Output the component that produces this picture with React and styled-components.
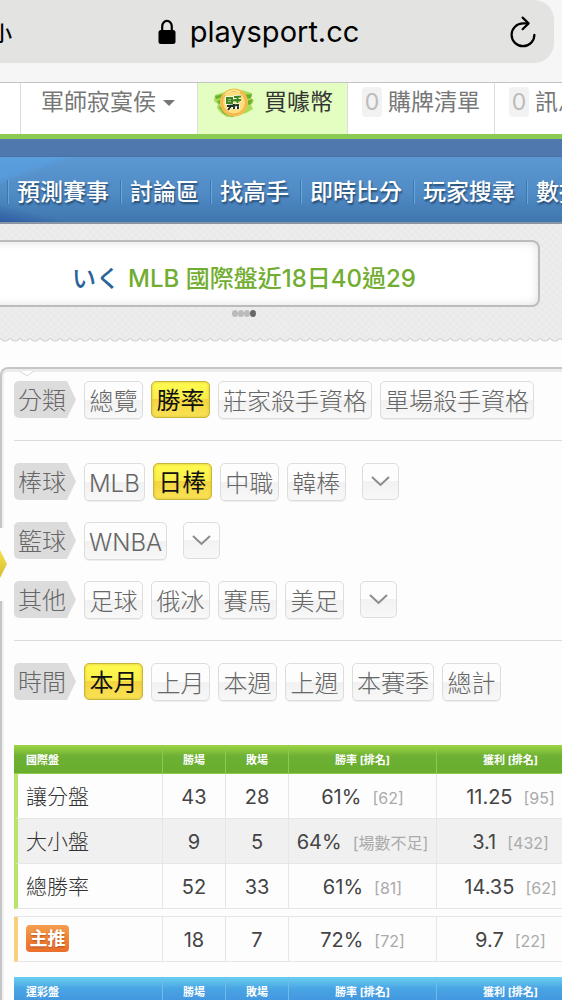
import styled, { createGlobalStyle, css } from "styled-components";

const accountLinks = [
	{ label: "購牌清單", count: 0 },
	{ label: "訊息匣", count: 0 },
];

const navLinks = ["預測賽事", "討論區", "找高手", "即時比分", "玩家搜尋", "數據"];

const filterGroups = [
	[{ title: "分類", options: ["總覽", "勝率", "莊家殺手資格", "單場殺手資格"], active: "勝率" }],
	[
		{ title: "棒球", options: ["MLB", "日棒", "中職", "韓棒"], active: "日棒", more: true },
		{ title: "籃球", options: ["WNBA"], more: true },
		{ title: "其他", options: ["足球", "俄冰", "賽馬", "美足"], more: true },
	],
	[{ title: "時間", options: ["本月", "上月", "本週", "上週", "本賽季", "總計"], active: "本月" }],
];

const records = [
	{ name: "讓分盤", win: 43, lose: 28, rate: "61%", rateRank: "62", profit: "11.25", profitRank: "95" },
	{ name: "大小盤", win: 9, lose: 5, rate: "64%", rateRank: "場數不足", profit: "3.1", profitRank: "432" },
	{ name: "總勝率", win: 52, lose: 33, rate: "61%", rateRank: "81", profit: "14.35", profitRank: "62" },
];

const mainPick = { win: 18, lose: 7, rate: "72%", rateRank: "72", profit: "9.7", profitRank: "22" };

const LockIcon = () => (
	<svg width="18" height="26" viewBox="0 0 18 26" aria-hidden="true">
		<path d="M4.2 12V7.5a4.8 5.6 0 0 1 9.6 0V12" fill="none" stroke="#000" strokeWidth="2.2" />
		<rect x="0.5" y="11" width="17" height="14" rx="2.5" fill="#000" />
	</svg>
);

const ReloadIcon = () => (
	<svg width="26" height="32" viewBox="0 0 26 32" fill="none" stroke="#000" strokeWidth="2.2" strokeLinecap="round" strokeLinejoin="round" aria-hidden="true">
		<path d="M18 7.4H13A11.4 11.4 0 1 0 24.4 18.8" />
		<path d="M12.6 1.6l6 5.8-6 5.8" />
	</svg>
);

const CoinIcon = () => (
	<svg width="40" height="32" viewBox="0 0 40 32" aria-hidden="true">
		<path d="M1 8l10-3 16-2 11 3-1 5 3 3-3 4 2 4-7 4-10 3-9 1-6-4-4-5 1-4-4-3z" fill="#a8dc57" />
		<path d="M1 9l9-2v3l-8 2zM3 14l8-2v3l-6 2zM28 8l10-1-1 4-8 2zM29 15l10-3-2 5-7 2zM5 20l6-1 8 7 8 1-9 3-8-3z" fill="#6eae2f" />
		<circle cx="20" cy="15.5" r="14" fill="#f3bd50" />
		<circle cx="20" cy="15.5" r="11.5" fill="#ffdf7d" stroke="#eeb044" strokeWidth="1" />
		<path d="M11 8l3-3 6-2 6 2" fill="none" stroke="#ffe79a" strokeWidth="1.5" />
		<path d="M13 11h5v5h-5zM20 10l7-.5M20 13h7M23.5 9v7M13 19l12-1M14 23l3-4M20 22v-5M24 22v-4" fill="none" stroke="#fff" strokeWidth="3.5" />
		<path d="M13 11h5v5h-5zM20 10l7-.5M20 13h7M23.5 9v7M14 13.500h12" fill="none" stroke="#3e861d" strokeWidth="2" />
		<path d="M13 19l12-1M14 23l3-4M20 22v-5M24 22v-4" fill="none" stroke="#1c3320" strokeWidth="2" />
	</svg>
);

const ChevronIcon = () => (
	<svg width="19" height="11" viewBox="0 0 19 11" fill="none" stroke="#8c8c8c" strokeWidth="2" aria-hidden="true">
		<path d="M1 1l8.5 8L18 1" />
	</svg>
);

const RecordCells = ({ row }) => (
	<>
		<Cell>{row.win}</Cell>
		<Cell>{row.lose}</Cell>
		<Cell>
			{row.rate}
			<Rank>[{row.rateRank}]</Rank>
		</Cell>
		<Cell>
			{row.profit}
			<Rank>[{row.profitRank}]</Rank>
		</Cell>
	</>
);

const TableHead = ({ title, tone }) => (
	<thead>
		<tr>
			{[title, "勝場", "敗場", "勝率 [排名]", "獲利 [排名]"].map((text) => (
				<HeadCell key={text} $tone={tone} scope="col">
					{text}
				</HeadCell>
			))}
		</tr>
	</thead>
);

const Columns = () => (
	<colgroup>
		<Column $width={148} />
		<Column $width={63} />
		<Column $width={63} />
		<Column $width={148} />
		<Column $width={148} />
	</colgroup>
);

const App = () => {
	return (
		<Page>
			<GlobalStyle />
			<Browser>
				<AddressBar>
					<TextSize type="button" aria-label="文字大小">小</TextSize>
					<Address type="button">
						<LockIcon />
						playsport.cc
					</Address>
					<Reload type="button" aria-label="重新載入">
						<ReloadIcon />
					</Reload>
				</AddressBar>
			</Browser>

			<AccountBar>
				<AccountStart />
				<AccountUser type="button">
					軍師寂寞侯
					<Caret />
				</AccountUser>
				<BuyLink href="#buy">
					<CoinIcon />
					買噱幣
				</BuyLink>
				{accountLinks.map((item) => (
					<AccountLink key={item.label} href="#account">
						<Count>{item.count}</Count>
						{item.label}
					</AccountLink>
				))}
			</AccountBar>

			<NavStrip />
			<Nav>
				{navLinks.map((label) => (
					<NavLink key={label} href="#nav">
						{label}
					</NavLink>
				))}
			</Nav>

			<Banner>
				<BannerBox>
					<BannerUser href="#user">いく</BannerUser>
					<BannerLink href="#record">MLB 國際盤近18日40過29</BannerLink>
				</BannerBox>
				<Dots>
					<Dot type="button" aria-label="1" />
					<Dot type="button" aria-label="2" />
					<Dot type="button" aria-label="3" />
					<Dot type="button" aria-label="4" $active />
				</Dots>
			</Banner>
			<Zigzag />

			<Panel>
				<Notch width="14" height="6" viewBox="0 0 14 6" aria-hidden="true">
					<path d="M0 0l7 5 7-5" fill="#fff" stroke="#d4d4d4" />
				</Notch>
				<SideTab />
				{filterGroups.map((group) => (
					<FilterGroup key={group[0].title}>
						{group.map((filter) => (
							<FilterRow key={filter.title}>
								<FilterTitle>{filter.title}</FilterTitle>
								{filter.options.map((option) => (
									<FilterButton key={option} type="button" $active={option === filter.active}>
										{option}
									</FilterButton>
								))}
								{filter.more && (
									<MoreButton type="button" aria-label="更多">
										<ChevronIcon />
									</MoreButton>
								)}
							</FilterRow>
						))}
					</FilterGroup>
				))}

				<Table>
					<Columns />
					<TableHead title="國際盤" tone="green" />
					<tbody>
						{records.map((row) => (
							<Row key={row.name}>
								<NameCell scope="row">{row.name}</NameCell>
								<RecordCells row={row} />
							</Row>
						))}
					</tbody>
				</Table>
				<PickTable>
					<Columns />
					<tbody>
						<Row>
							<NameCell scope="row" $pick>
								<PickBadge>主推</PickBadge>
							</NameCell>
							<RecordCells row={mainPick} />
						</Row>
					</tbody>
				</PickTable>
				<Table>
					<Columns />
					<TableHead title="運彩盤" tone="blue" />
				</Table>
			</Panel>
		</Page>
	);
};

const GlobalStyle = createGlobalStyle`
	* {
		box-sizing: border-box;
	}

	body {
		margin: 0;
		background: #fdfdfd;
		font-family: Inter, "Noto Sans CJK TC", sans-serif;
	}

	button {
		font: inherit;
		color: inherit;
		border: 0;
		padding: 0;
		background: none;
		cursor: pointer;
	}

	a {
		color: inherit;
		text-decoration: none;
	}
`;

const Page = styled.div`
	height: 100vh;
	overflow: hidden;
	white-space: nowrap;
`;

const Browser = styled.header`
	height: 83px;
	padding-right: 8px;
	background: #f6f6f6;
	border-bottom: 1px solid #c4c4c4;
`;

const AddressBar = styled.div`
	height: 63px;
	margin-left: -37px;
	padding: 0 18px;
	display: grid;
	grid-template-columns: 1fr auto 1fr;
	align-items: center;
	background: #e3e3e2;
	border-radius: 0 20px 20px 0;
`;

const TextSize = styled.button`
	justify-self: start;
	padding: 2px 0 0 11px;
	font-size: 20px;
	font-weight: 500;
`;

const Address = styled.button`
	display: flex;
	align-items: center;
	gap: 14px;
	font-size: 29px;
	line-height: 36px;
`;

const Reload = styled.button`
	display: flex;
	justify-self: end;
`;

const AccountBar = styled.div`
	display: flex;
	height: 56px;
	background: #fff;
	border-bottom: 5px solid #8bcb52;
	color: #777;
	font-size: 23px;
	line-height: 38px;
`;

const AccountStart = styled.div`
	flex: none;
	width: 21px;
	border-right: 1px solid #ddd;
`;

const accountCell = css`
	flex: none;
	display: flex;
	align-items: flex-start;
	border-right: 1px solid #ddd;
`;

const AccountUser = styled.button`
	${accountCell}
	padding: 0 22px 0 20px;
	border-right: 1px solid #ddd;
`;

const Caret = styled.span`
	margin: 17px 0 0 7px;
	border: 6px solid transparent;
	border-top-color: #777;
	border-bottom: 0;
`;

const BuyLink = styled.a`
	${accountCell}
	gap: 10px;
	padding: 0 14px 0 16px;
	background: #e4fdc0;
	color: #333;

	svg {
		margin-top: 4px;
	}
`;

const AccountLink = styled.a`
	${accountCell}
	gap: 6px;
	padding: 0 14px 0 14px;
`;

const Count = styled.span`
	width: 20px;
	margin-top: 4px;
	border-radius: 4px;
	background: #f2f2f2;
	color: #bbb;
	line-height: 30px;
	text-align: center;
`;

const NavStrip = styled.div`
	height: 18px;
	background: #4f78ae;
	border-bottom: 1px solid #4a71a5;
`;

const Nav = styled.nav`
	display: flex;
	align-items: center;
	height: 67px;
	padding-left: 7px;
	background:
		linear-gradient(160deg, rgba(90, 165, 235, 0.5) 0 20px, transparent 28px),
		linear-gradient(15deg, rgba(40, 80, 160, 0.7) 0, transparent 18px),
		linear-gradient(#5b97d0, #508bc6 55%, #3f76ad);
	border-bottom: 2px solid #8995a2;
`;

const NavLink = styled.a`
	flex: none;
	padding: 0 11px 0 9px;
	border-left: 1px solid #3c77ad;
	box-shadow: inset 1px 0 #62a9da;
	color: #fff;
	font-size: 23px;
	font-weight: 500;
	line-height: 24px;
	height: 24px;
	margin-top: 4px;
	text-shadow: 1px 2px 2px #24496f;
`;

const Banner = styled.section`
	height: 114px;
	padding: 16px 22px 0 0;
	background:
		repeating-linear-gradient(45deg, transparent 0 3px, rgba(0, 0, 0, 0.01) 3px 5px),
		repeating-linear-gradient(-45deg, #ededed 0 3px, #ebebeb 3px 5px);
`;

const BannerBox = styled.div`
	display: flex;
	justify-content: center;
	gap: 8px;
	margin-left: -52px;
	padding: 24px 0 14px;
	background: #fff;
	border: 2px solid #bcbcbc;
	border-radius: 8px;
	box-shadow: inset 0 0 10px #ddd;
	font-size: 24px;
	font-weight: 500;
	line-height: 25px;
`;

const BannerUser = styled.a`
	color: #2a6396;
`;

const BannerLink = styled.a`
	color: #71ad30;
`;

const Dots = styled.div`
	display: flex;
	justify-content: center;
	margin: 3px 0 0 -52px;
`;

const Dot = styled.button`
	width: 6px;
	height: 7px;
	border-radius: 50%;
	background: ${(props) => (props.$active ? "#666" : "#bbb")};
`;

const Zigzag = styled.div`
	height: 5px;
	background: radial-gradient(circle at 5px -2px, #ececec 0 4px, #cfcfcf 5px, #fdfdfd 6px) 0 0 / 10px 5px repeat-x;
`;

const Panel = styled.main`
	position: relative;
	margin-top: 24px;
	min-height: 660px;
	padding: 12px 0 0 12px;
	background: #fdfdfd;
	border: 2px solid #c6c6c6;
	border-right: 0;
	border-radius: 8px 0 0 0;
	box-shadow: inset 0 3px #ececec, inset 2px 0 #f0f0f0;
`;

const Notch = styled.svg`
	position: absolute;
	top: 2px;
	left: 18px;
`;

const SideTab = styled.div`
	position: absolute;
	top: 159px;
	left: -2px;
	width: 7px;
	height: 73px;
	background: #fdfdfd;

	&::before {
		content: "";
		position: absolute;
		top: 22px;
		left: 0;
		width: 7px;
		height: 28px;
		background: linear-gradient(#f4e34a, #d8bb35);
		clip-path: polygon(0 0, 100% 50%, 0 100%);
	}
`;

const FilterGroup = styled.section`
	display: grid;
	gap: 21px;
	padding-bottom: 21px;

	& + & {
		padding-top: 22px;
		border-top: 1px solid #dcdcdc;
	}

	&:nth-last-of-type(1) {
		padding-bottom: 44px;
	}
`;

const FilterRow = styled.div`
	display: flex;
	gap: 8px;
	height: 38px;
	font-size: 24px;
	font-weight: 300;
	color: #666;
`;

const FilterTitle = styled.div`
	flex: none;
	width: 62px;
	height: 37px;
	padding: 2px 0 0 4px;
	background: #dcdcdc;
	border-radius: 5px;
	line-height: 36px;
	clip-path: polygon(0 0, 53px 0, 100% 50%, 53px 100%, 0 100%);
`;

const FilterButton = styled.button`
	flex: none;
	min-width: 59px;
	height: 38px;
	padding: 2px 4px 0;
	border: 1px solid #ddd;
	border-radius: 5px;
	background: linear-gradient(#fdfdfd 50%, #f1f1f1 50%, #f8f8f8);
	box-shadow: 0 1px #eee;
	line-height: 33px;

	${(props) =>
		props.$active &&
		css`
			height: 37px;
			border: 1px solid #c9b536;
			background: linear-gradient(#fffb50, #f9ee4a 50%, #f4d53f 50%, #fae255);
			box-shadow: inset 0 0 3px #d9bd3c;
			color: #111;
			font-weight: 400;
		`}
`;

const MoreButton = styled.button`
	display: flex;
	align-items: center;
	justify-content: center;
	width: 37px;
	height: 37px;
	margin-left: 8px;
	border: 1px solid #ddd;
	border-radius: 5px;
	background: linear-gradient(#fdfdfd 50%, #f2f2f2 50%, #f8f8f8);
`;

const Table = styled.table`
	width: 570px;
	table-layout: fixed;
	border-collapse: separate;
	border-spacing: 0;
`;

const PickTable = styled(Table)`
	margin: 7px 0 15px;
	border-top: 1px solid #e6e6e6;
`;

const Column = styled.col`
	width: ${(props) => props.$width}px;
`;

const tones = {
	green: { background: "linear-gradient(#9fd445, #6db034 40%, #69ae2f)", line: "#8fc950" },
	blue: { background: "linear-gradient(#6bd0f0, #4aa5e4 40%, #3f92dc)", line: "#6dbcec" },
};

const HeadCell = styled.th`
	height: 29px;
	padding: 2px 0 0;
	background: ${(props) => tones[props.$tone].background};
	border-bottom: 1px solid ${(props) => tones[props.$tone].line};
	border-left: 1px solid ${(props) => tones[props.$tone].line};
	color: #fff;
	font-size: 11px;
	font-weight: 700;
	line-height: 16px;

	&:first-child {
		padding-left: 12px;
		border-left: 0;
		text-align: left;
	}
`;

const Row = styled.tr`
	height: 45px;

	&:nth-child(2) {
		background: #f0f0f0;
	}
`;

const NameCell = styled.th`
	padding: 2px 0 0 8px;
	border-bottom: 1px solid #e6e6e6;
	border-left: 4px solid ${(props) => (props.$pick ? "#fbcf7c" : "#b9e467")};
	color: #333;
	font-size: 21px;
	font-weight: 300;
	line-height: 30px;
	text-align: left;
`;

const Cell = styled.td`
	padding: 2px 0 0;
	border-bottom: 1px solid #e6e6e6;
	border-left: 1px solid #e6e6e6;
	color: #444;
	font-size: 20px;
	line-height: 30px;
	text-align: center;
`;

const Rank = styled.span`
	margin-left: 11px;
	color: #aaa;
	font-size: 16px;
`;

const PickBadge = styled.span`
	display: block;
	width: 43px;
	margin-bottom: 4px;
	border-radius: 4px;
	background: linear-gradient(#f4a04f, #ee7f35 60%, #ec6f2c);
	color: #fff;
	font-size: 18px;
	font-weight: 700;
	line-height: 27px;
	text-align: center;
	text-shadow: 0 1px 2px #b34d1a;
`;

export default App;
